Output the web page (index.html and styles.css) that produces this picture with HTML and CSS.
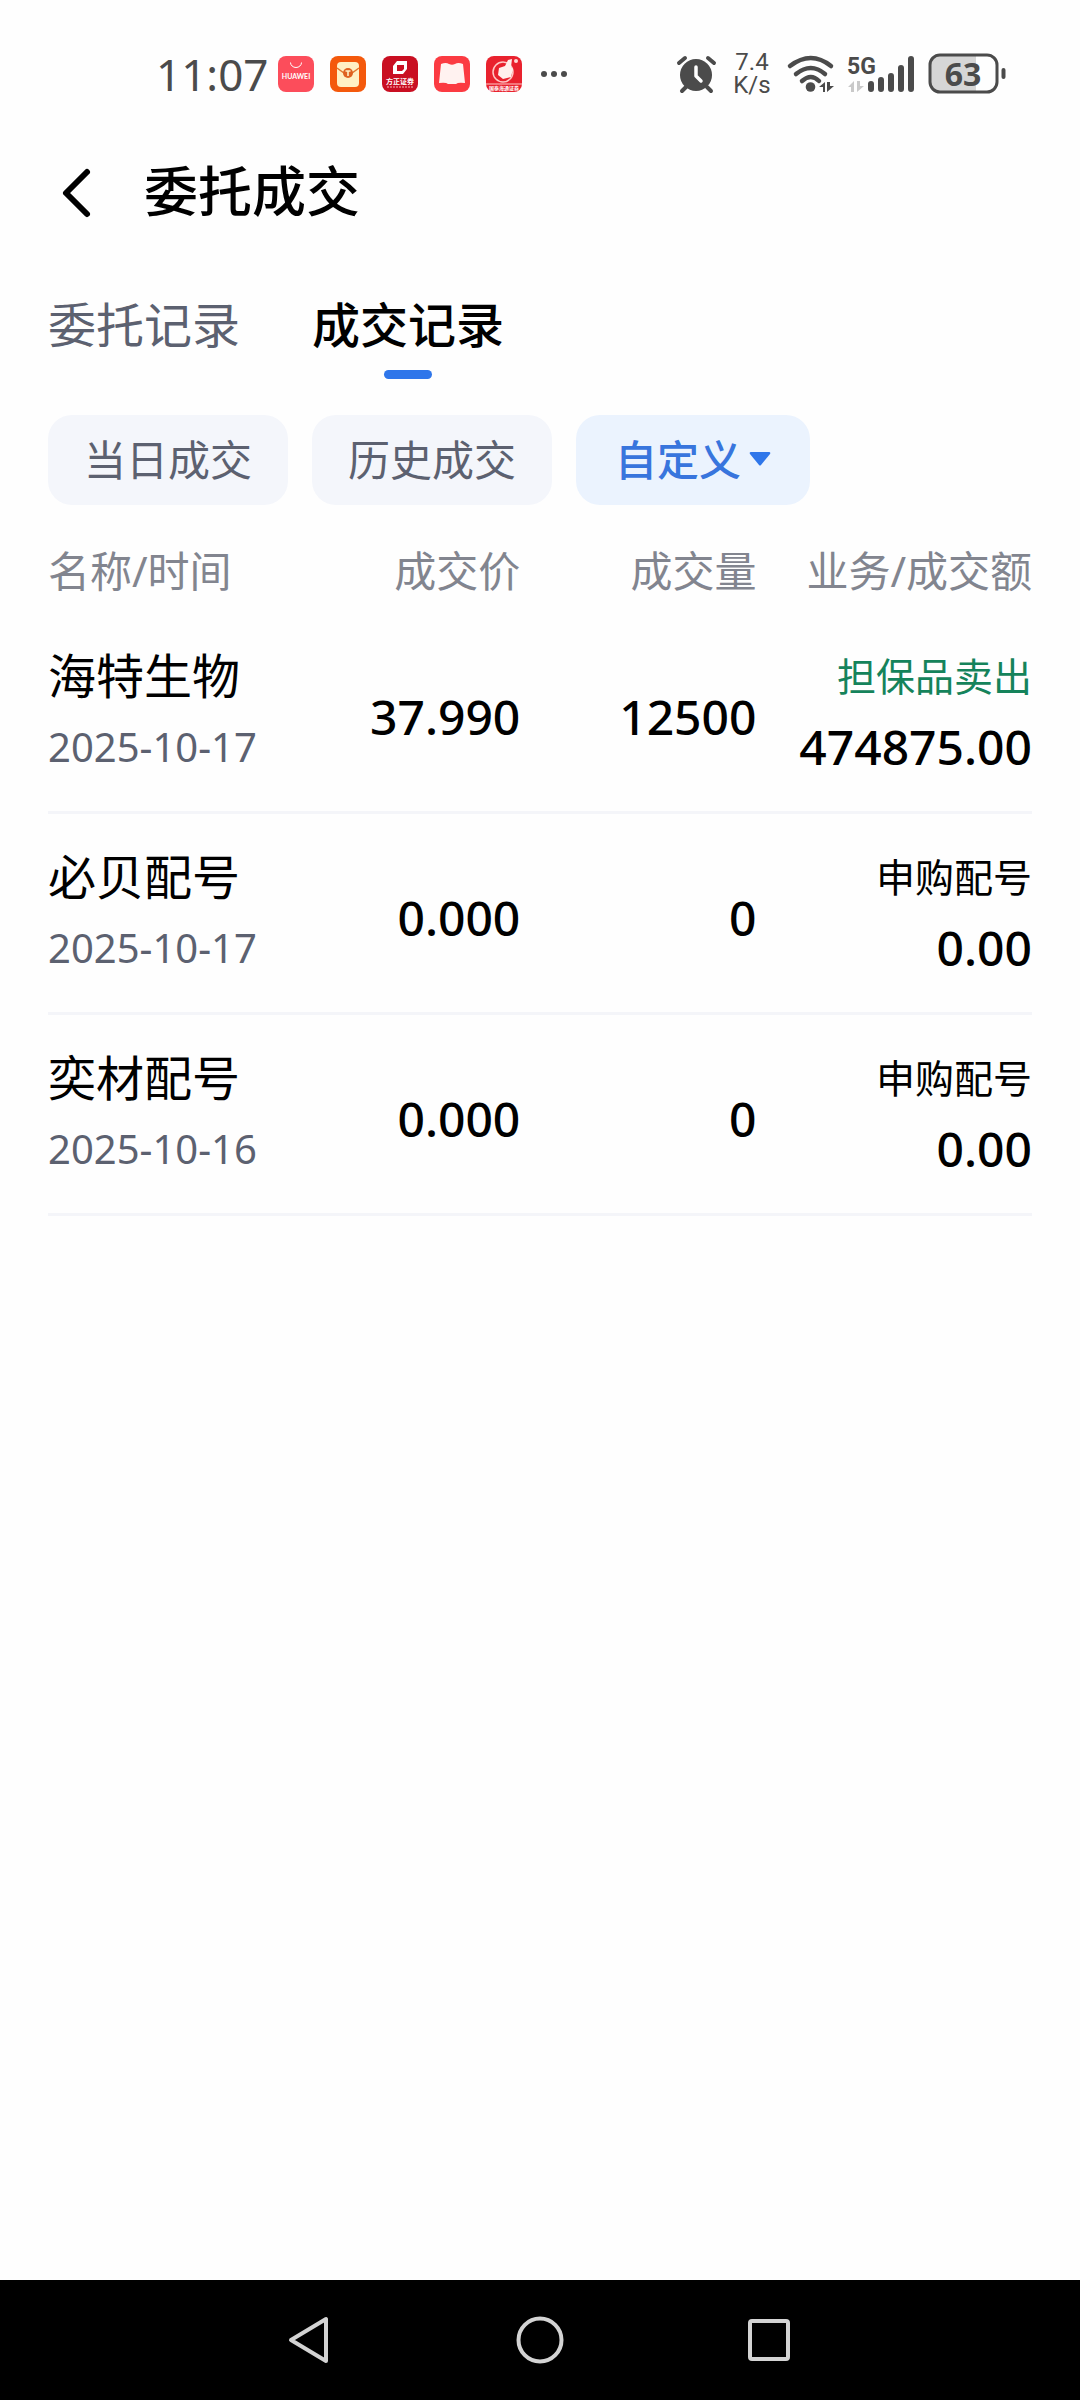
FILE: index.html
```html
<!DOCTYPE html>
<html lang="zh-CN">
<head>
<meta charset="utf-8">
<meta name="viewport" content="width=device-width, initial-scale=1">
<title>委托成交</title>
<link rel="stylesheet" href="styles.css">
</head>
<body>
<div class="status">
  <div class="status-left">
    <time class="clock">11:07</time>
    <div class="apps">
      <svg class="app" viewBox="0 0 36 36" aria-hidden="true">
        <rect width="36" height="36" rx="8" fill="#fc4d5b"/>
        <path d="M12.500 6.500a5.500 5 0 0 0 11 0" fill="none" stroke="#fff" stroke-width="1"/>
        <text x="18" y="23" text-anchor="middle" class="app-word">HUAWEI</text>
      </svg>
      <svg class="app" viewBox="0 0 36 36" aria-hidden="true">
        <rect width="36" height="36" rx="8" fill="#f4590c"/>
        <rect x="7" y="6" width="22" height="25" rx="4" fill="#fff0c4"/>
        <path d="M7 12l7 5h8l7-5" fill="none" stroke="#e0762e" stroke-width="1.500"/>
        <circle cx="18" cy="17" r="5" fill="#df6120"/>
        <path d="M15.500 15h5M18 15v5" stroke="#fff0c4" stroke-width="1.600"/>
      </svg>
      <svg class="app" viewBox="0 0 36 36" aria-hidden="true">
        <rect width="36" height="36" rx="8" fill="#c90f22"/>
        <path d="M15 5h10v8l-4 5H11v-8zM15 9v6h5l2-2V9z" fill="#fff" fill-rule="evenodd"/>
        <text x="18" y="28" text-anchor="middle" class="app-cn">方正证券</text>
        <path d="M5 31h26" stroke="#f7b5b8" stroke-width="1" stroke-dasharray="2 1"/>
      </svg>
      <svg class="app" viewBox="0 0 36 36" aria-hidden="true">
        <rect width="36" height="36" rx="8" fill="#fb3b42"/>
        <path d="M7 8q5-2 8 0 3 1.500 6 0 3-2 8 0l2 19q-7-1-9 1h-8q-2-2-9-1z" fill="#fff2f0"/>
      </svg>
      <svg class="app" viewBox="0 0 36 36" aria-hidden="true">
        <rect width="36" height="36" rx="8" fill="#e9222e"/>
        <circle cx="17" cy="16" r="10" fill="none" stroke="#ffc9c6" stroke-width="1.500"/>
        <path d="M13 12l6-2 3-6 4-1-1 8 2 2-2 8-8 2-5-4z" fill="#fff0ed"/>
        <circle cx="30" cy="5" r="2" fill="#ffd9d5"/>
        <path d="M0 28h36" stroke="#ffc9c6" stroke-width="1"/>
        <text x="18" y="34" text-anchor="middle" class="app-tiny">国泰海通证券</text>
      </svg>
    </div>
    <svg class="more" viewBox="0 0 28 8" aria-hidden="true"><g fill="#4b4b4b"><circle cx="4" cy="4" r="3"/><circle cx="14" cy="4" r="3"/><circle cx="24" cy="4" r="3"/></g></svg>
  </div>
  <div class="status-right">
    <svg width="40" height="46" viewBox="678 50 40 46" aria-hidden="true">
      <path d="M686 86l-4 4M707 86l4 4M679 62l6-5M714 62l-6-5" stroke="#4b4b4b" stroke-width="4" stroke-linecap="round"/>
      <circle cx="696" cy="74" r="16" fill="#4b4b4b"/>
      <path d="M696 66v9l5 5" fill="none" stroke="#fff" stroke-width="3.500" stroke-linecap="round" stroke-linejoin="round"/>
    </svg>
    <div class="rate"><span>7.4</span><span>K/s</span></div>
    <svg width="46" height="46" viewBox="786 50 46 46" aria-hidden="true">
      <g fill="none" stroke="#4b4b4b" stroke-width="4.500" stroke-linecap="round">
        <path d="M790 65q21-16 41 0M796 73q15-12 29 0M802 80q9-8 17 0"/>
      </g>
      <circle cx="810.500" cy="86" r="4.800" fill="#4b4b4b"/>
      <path d="M819 86l6-5v10h-2v-5zM827 81v10l7-6h-4v-4z" fill="#4b4b4b"/>
    </svg>
    <svg width="68" height="46" viewBox="846 50 68 46" aria-hidden="true">
      <text x="847" y="73" class="net">5G</text>
      <g stroke="#4b4b4b" stroke-width="6" stroke-linecap="round"><path d="M871 83v5M881 79v9M891 75v13M901 67v21M911 58v30"/></g>
      <path d="M848 86l6-6v11h-3v-5zM857 80v11l7-6h-4v-5z" fill="#c9c9c9"/>
    </svg>
    <svg width="78" height="46" viewBox="928 50 78 46" role="img" aria-label="电量 63%">
      <path d="M940 55h36v36h-36q-9 0-9-9V64q0-9 9-9z" fill="#d6d6d6"/>
      <rect x="930" y="54" width="67" height="37" rx="10" fill="none" stroke="#4b4b4b" stroke-width="3"/>
      <path d="M1003.500 69v7" stroke="#4b4b4b" stroke-width="4" stroke-linecap="round"/>
      <text x="963" y="85" text-anchor="middle" class="charge">63</text>
    </svg>
  </div>
</div>

<header class="topbar">
  <button class="back" type="button" aria-label="返回">
    <svg width="54" height="54" viewBox="48 164 54 54" aria-hidden="true"><path d="M87 172l-21 21 21 21" fill="none" stroke="#000" stroke-width="6" stroke-linecap="round" stroke-linejoin="round"/></svg>
  </button>
  <h1 class="title">委托成交</h1>
</header>

<main class="content">
  <nav class="tabs">
    <a class="tab" href="#orders">委托记录</a>
    <a class="tab tab-active" href="#deals" aria-current="page">成交记录</a>
  </nav>

  <div class="filters">
    <button class="chip" type="button">当日成交</button>
    <button class="chip" type="button">历史成交</button>
    <button class="chip chip-active" type="button">自定义<svg width="22" height="16" viewBox="0 0 22 16" aria-hidden="true"><path d="M2 0h18q2 0 1 2l-9 11q-1 1-2 0L1 2q-1-2 1-2z" fill="#2f76ea"/></svg></button>
  </div>

  <table class="deals">
    <colgroup><col class="col-name"><col class="col-price"><col class="col-qty"><col class="col-sum"></colgroup>
    <thead>
      <tr><th scope="col">名称/时间</th><th scope="col">成交价</th><th scope="col">成交量</th><th scope="col">业务/成交额</th></tr>
    </thead>
    <tbody>
      <tr>
        <td><div class="name">海特生物</div><div class="date">2025-10-17</div></td>
        <td class="num">37.990</td>
        <td class="num">12500</td>
        <td><div class="kind kind-sell">担保品卖出</div><div class="sum">474875.00</div></td>
      </tr>
      <tr>
        <td><div class="name">必贝配号</div><div class="date">2025-10-17</div></td>
        <td class="num">0.000</td>
        <td class="num">0</td>
        <td><div class="kind">申购配号</div><div class="sum">0.00</div></td>
      </tr>
      <tr>
        <td><div class="name">奕材配号</div><div class="date">2025-10-16</div></td>
        <td class="num">0.000</td>
        <td class="num">0</td>
        <td><div class="kind">申购配号</div><div class="sum">0.00</div></td>
      </tr>
    </tbody>
  </table>
</main>

<footer class="sysnav">
  <button type="button" aria-label="后退"><svg width="48" height="54" viewBox="0 0 48 54" aria-hidden="true"><path d="M39 6v42L4 27z" fill="none" stroke="#d3d3d3" stroke-width="4" stroke-linejoin="round"/></svg></button>
  <button type="button" aria-label="主屏幕"><svg width="48" height="54" viewBox="0 0 48 54" aria-hidden="true"><circle cx="24" cy="27" r="21.500" fill="none" stroke="#d3d3d3" stroke-width="4"/></svg></button>
  <button type="button" aria-label="最近任务"><svg width="48" height="54" viewBox="0 0 48 54" aria-hidden="true"><rect x="5" y="8" width="38" height="38" rx="2" fill="none" stroke="#d3d3d3" stroke-width="4"/></svg></button>
</footer>
</body>
</html>
```
FILE: styles.css
```css
* {
  box-sizing: border-box;
}

body {
  display: flex;
  flex-direction: column;
  min-height: 100vh;
  margin: 0;
  background: #fefefe;
  color: #000;
  font-family: "Noto Sans", "Noto Sans CJK SC", sans-serif;
}

button {
  padding: 0;
  border: 0;
  background: none;
  color: inherit;
  font: inherit;
}

svg {
  display: block;
  flex: none;
  overflow: visible;
}

/* System status bar */
.status {
  display: flex;
  align-items: center;
  justify-content: space-between;
  height: 147px;
  padding: 0 74px 0 156px;
  color: #4b4b4b;
}

.status-left,
.status-right,
.apps {
  display: flex;
  align-items: center;
}

.clock {
  margin-right: 10px;
  font-size: 44px;
  line-height: 54px;
}

.apps {
  gap: 16px;
}

.app {
  width: 36px;
  height: 36px;
}

.app-word {
  fill: #fff;
  font: 700 7px Lato, sans-serif;
}

.app-cn {
  fill: #fff;
  font: 700 7px "Noto Sans CJK SC", sans-serif;
}

.app-tiny {
  fill: #fff;
  font: 700 5px "Noto Sans CJK SC", sans-serif;
}

.more {
  width: 28px;
  height: 8px;
  margin-left: 18px;
}

.status-right {
  gap: 14px;
}

.rate {
  display: flex;
  flex-direction: column;
  align-items: center;
  width: 40px;
  font: 400 24px/23px Roboto, sans-serif;
}

.net {
  fill: #4b4b4b;
  font: 700 23px Roboto, sans-serif;
}

.charge {
  fill: #4b4b4b;
  font: 700 32px "Noto Sans", sans-serif;
}

/* Page header */
.topbar {
  display: flex;
  align-items: center;
  gap: 42px;
  height: 88px;
  padding: 0 48px;
}

.title {
  margin: 0;
  font-size: 54px;
  font-weight: 500;
  line-height: 72px;
}

.content {
  flex: 1;
  padding: 54px 48px 48px;
}

.tabs {
  display: flex;
  gap: 72px;
  height: 90px;
}

.tab {
  display: flex;
  flex-direction: column;
  align-items: center;
  gap: 9px;
  color: #5c6170;
  font-size: 48px;
  line-height: 72px;
  text-decoration: none;
}

.tab-active {
  color: #000;
  font-weight: 500;
}

.tab-active::after {
  width: 48px;
  height: 9px;
  border-radius: 5px;
  background: #2f76ea;
  content: "";
}

.filters {
  display: flex;
  gap: 24px;
  margin: 36px 0 24px;
}

.chip {
  display: flex;
  align-items: center;
  gap: 8px;
  height: 90px;
  padding: 0 36px;
  border-radius: 24px;
  background: #f4f6fb;
  color: #5c6170;
  font-size: 42px;
  line-height: 60px;
}

.chip-active {
  padding: 0 39px;
  background: #ebf3fe;
  color: #3875dd;
  font-weight: 500;
}

/* Deals table */
.deals {
  width: 100%;
  border-collapse: separate;
  border-spacing: 0;
  table-layout: fixed;
  text-align: right;
}

.col-name {
  width: 25%;
}

.col-price {
  width: 23%;
}

.col-qty {
  width: 24%;
}

.col-sum {
  width: 28%;
}

.deals th {
  height: 84px;
  padding: 0;
  color: #82858f;
  font-size: 42px;
  font-weight: 400;
  line-height: 60px;
  white-space: nowrap;
}

.deals th:first-child,
.deals td:first-child {
  text-align: left;
}

.deals td {
  padding: 27px 0 30px;
  border-bottom: 3px solid #f4f5f9;
  white-space: nowrap;
}

.name,
.kind {
  line-height: 72px;
}

.name {
  font-size: 48px;
}

.kind {
  font-size: 39px;
}

.kind-sell {
  color: #15835b;
}

.date {
  color: #5c6170;
  font-size: 40px;
  line-height: 69px;
}

.sum,
.deals .num {
  font-size: 48px;
  font-weight: 500;
}

.sum {
  line-height: 69px;
}

.deals .num {
  padding: 36px 0 27px;
  line-height: 60px;
}

/* System navigation bar */
.sysnav {
  display: flex;
  align-items: center;
  justify-content: center;
  gap: 181px;
  height: 120px;
  background: #000;
}
```
